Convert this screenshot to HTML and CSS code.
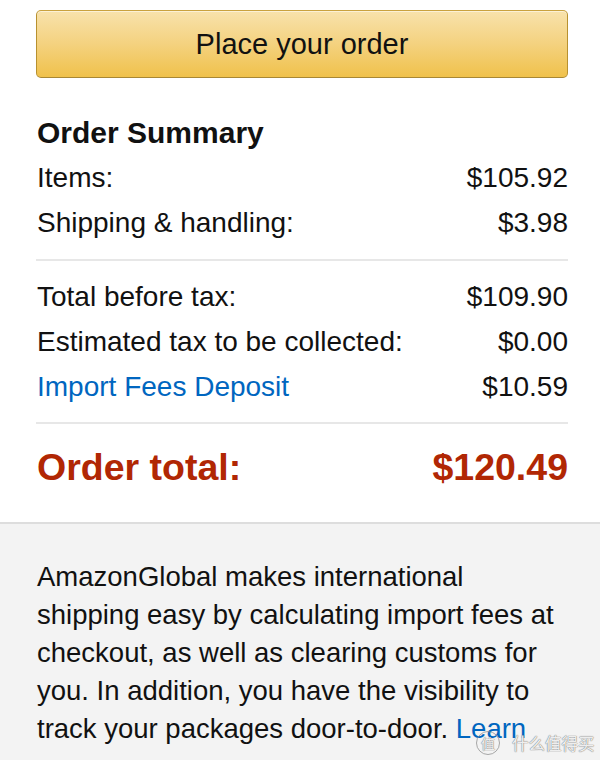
FILE: index.html
```html
<!DOCTYPE html>
<html lang="en">
<head>
<meta charset="utf-8">
<title>Order Summary</title>
<link rel="stylesheet" href="styles.css">
</head>
<body>
<div class="page">
  <section class="summary">
    <button class="place-order" type="button">Place your order</button>
    <h2 class="summary-title">Order Summary</h2>
    <div class="row"><span>Items:</span><span>$105.92</span></div>
    <div class="row"><span>Shipping &amp; handling:</span><span>$3.98</span></div>
    <hr class="divider">
    <div class="row"><span>Total before tax:</span><span>$109.90</span></div>
    <div class="row"><span>Estimated tax to be collected:</span><span>$0.00</span></div>
    <div class="row"><a class="link" href="#">Import Fees Deposit</a><span>$10.59</span></div>
    <hr class="divider divider-total">
    <div class="row total"><span>Order total:</span><span>$120.49</span></div>
  </section>
  <section class="info">
    <p>AmazonGlobal makes international shipping easy by calculating import fees at checkout, as well as clearing customs for you. In addition, you have the visibility to track your packages door-to-door. <a class="link" href="#">Learn</a></p>
  </section>
  <div class="watermark"><span class="wm-badge">值</span><span class="wm-text">什么值得买</span></div>
</div>
</body>
</html>
```

FILE: styles.css
```css
html, body {
  margin: 0;
  padding: 0;
  background: #fff;
}

.page {
  position: relative;
  width: 600px;
  height: 760px;
  overflow: hidden;
  font-family: "Liberation Sans", Arial, sans-serif;
  color: #111;
}

.summary {
  padding: 10px 32px 30px 36px;
}

.place-order {
  display: block;
  width: 100%;
  height: 68px;
  margin: 0;
  padding: 0;
  border: 1px solid;
  border-color: #c9a23f #b8912f #a88734;
  border-radius: 5px;
  background: linear-gradient(to bottom, #f8e2ac 0%, #f4d27f 50%, #f0c14b 100%);
  box-shadow: inset 0 1px 0 rgba(255, 255, 255, 0.5);
  font-family: "Liberation Sans", Arial, sans-serif;
  font-size: 29px;
  color: #111;
  text-align: center;
  line-height: 64px;
}

.summary-title {
  margin: 35px 0 2px 1px;
  font-size: 30px;
  line-height: 40px;
  font-weight: bold;
  color: #111;
}

.row {
  display: flex;
  justify-content: space-between;
  padding-left: 1px;
  font-size: 28px;
  line-height: 45px;
}

.link {
  color: #0066c0;
  text-decoration: none;
}

.divider {
  margin: 14px 0 13px 0;
  border: 0;
  border-top: 2px solid #e7e7e7;
  height: 0;
}

.divider-total {
  margin: 13px 0 18px 0;
}

.total {
  font-size: 37.5px;
  line-height: 50px;
  font-weight: bold;
  color: #b12704;
}

.info {
  border-top: 2px solid #dddddd;
  background: #f3f3f3;
  padding: 34px 32px 20px 37px;
  min-height: 300px;
}

.info p {
  margin: 0;
  font-size: 27.5px;
  line-height: 38px;
  color: #111;
}

.watermark {
  position: absolute;
  left: 476px;
  top: 731px;
  display: flex;
  align-items: center;
  gap: 12px;
  color: rgba(255, 255, 255, 0.9);
  font-family: "Noto Sans CJK SC", sans-serif;
}

.wm-badge {
  width: 22px;
  height: 22px;
  border: 1.5px solid rgba(140, 140, 140, 0.75);
  border-radius: 50%;
  font-size: 14px;
  line-height: 22px;
  text-align: center;
  text-shadow: 0 0 1px #777, 0 0 1px #777;
}

.wm-text {
  font-size: 16.5px;
  line-height: 22px;
  text-shadow: 0 0 1px #777, 0 0 1px #777;
}
```
